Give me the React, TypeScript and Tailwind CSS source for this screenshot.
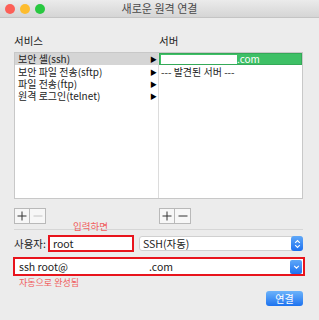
import React from "react"

const font = { fontFamily: '"Noto Sans CJK KR", "Liberation Sans", sans-serif' }

const services = ["보안 셸(ssh)", "보안 파일 전송(sftp)", "파일 전송(ftp)", "원격 로그인(telnet)"]

function PlusMinus({ minusDisabled }: { minusDisabled?: boolean }) {
  return (
    <div className="flex">
      <div className="w-[16px] h-[16px] border border-[#b9b9b9] bg-[#f7f7f7] flex items-center justify-center text-[#333]">
        <svg width="10" height="10" viewBox="0 0 10 10">
          <path d="M5 0.5V9.5M0.5 5H9.5" stroke="currentColor" strokeWidth="1" />
        </svg>
      </div>
      <div
        className={`w-[16px] h-[16px] border border-l-0 border-[#b9b9b9] bg-[#f7f7f7] flex items-center justify-center ${
          minusDisabled ? "text-[#c4c4c4]" : "text-[#333]"
        }`}
      >
        <svg width="10" height="10" viewBox="0 0 10 10">
          <path d="M0.5 5H9.5" stroke="currentColor" strokeWidth="1" />
        </svg>
      </div>
    </div>
  )
}

export default function App() {
  return (
    <div className="w-[319px] h-[320px] bg-[#ececec] flex flex-col overflow-hidden text-[#222]" style={font}>
      {/* 타이틀 바 */}
      <div className="h-[18px] flex items-center relative bg-gradient-to-b from-[#ebebeb] to-[#d5d5d5] border-b border-[#c4c4c4]">
        <div className="flex gap-[5px] pl-[5px]">
          <span className="w-[10px] h-[10px] rounded-full bg-[#fc5f57]" />
          <span className="w-[10px] h-[10px] rounded-full bg-[#fdbc2e]" />
          <span className="w-[10px] h-[10px] rounded-full bg-[#28c840]" />
        </div>
        <div className="absolute inset-0 flex items-center justify-center text-[11px] text-[#4a4a4a]">
          새로운 원격 연결
        </div>
      </div>

      <div className="flex flex-col pl-[14px] pr-[16px]">
        {/* 라벨 */}
        <div className="flex pt-[16px] h-[34px] text-[10.5px] leading-[14px]">
          <div className="w-[145px]">서비스</div>
          <div>서버</div>
        </div>

        {/* 목록 */}
        <div className="h-[147px] flex border border-[#c8c8c8] bg-white text-[10px] leading-[12px]">
          <div className="w-[144px] border-r border-[#dcdcdc] flex flex-col">
            {services.map((s, i) => (
              <div
                key={s}
                className={`h-[12.4px] flex items-center justify-between pl-[3px] pr-[1px] ${
                  i === 0 ? "bg-[#d5d5d5]" : ""
                }`}
              >
                <span className="leading-[12px]">{s}</span>
                <span className="text-[7px] leading-[8px] text-black">▶</span>
              </div>
            ))}
          </div>
          <div className="flex-1 flex flex-col">
            <div className="h-[12.4px] bg-[#3ec066] border border-[#35a958] flex items-center pl-[1px]">
              <span className="w-[76px] h-[9px] bg-white" />
              <span className="text-white leading-[12px]">.com</span>
            </div>
            <div className="h-[12.4px] flex items-center pl-[2px]">--- 발견된 서버 ---</div>
          </div>
        </div>

        {/* +/- */}
        <div className="flex pt-[9px] h-[30px]">
          <div className="w-[145px]">
            <PlusMinus minusDisabled />
          </div>
          <PlusMinus />
        </div>

        {/* 구분선 */}
        <div className="relative h-[6px]">
          <div className="border-t border-[#d6d6d6]" />
          <span className="absolute left-[59px] top-[-8px] text-[9.5px] leading-[11px] text-[#f06060]">입력하면</span>
        </div>

        {/* 사용자 */}
        <div className="flex items-center h-[17px]">
          <span className="w-[34px] text-[10.5px]">사용자:</span>
          <div className="w-[86px] h-[17px] border-2 border-[#e8141c] bg-white flex items-center pl-[3px] text-[10.5px]">
            root
          </div>
          <div className="ml-[5px] flex-1 h-[15px] border border-[#d0d0d0] rounded-[3px] bg-white flex items-center pl-[3px] text-[10.5px] relative">
            SSH(자동)
            <div className="absolute right-[-1px] top-[-1px] w-[12px] h-[15px] rounded-[3px] bg-gradient-to-b from-[#5fa8f8] to-[#1a6ff0] flex items-center justify-center">
              <svg width="7" height="10" viewBox="0 0 7 10">
                <path d="M1.2 3.8L3.5 1.5L5.8 3.8M1.2 6.2L3.5 8.5L5.8 6.2" stroke="white" strokeWidth="1.1" fill="none" />
              </svg>
            </div>
          </div>
        </div>

        {/* 명령 콤보 */}
        <div className="mt-[5px] ml-[-1px] mr-[-2px] h-[19px] border-2 border-[#e8141c] bg-white flex items-center pl-[4px] text-[10.5px] relative">
          <span className="w-[130px]">ssh root@</span>
          <span>.com</span>
          <div className="absolute right-[1px] top-[1px] w-[12px] h-[14px] rounded-[2px] bg-gradient-to-b from-[#5fa8f8] to-[#1a6ff0] flex items-center justify-center">
            <svg width="7" height="6" viewBox="0 0 7 6">
              <path d="M1.2 1.8L3.5 4.2L5.8 1.8" stroke="white" strokeWidth="1.1" fill="none" />
            </svg>
          </div>
        </div>

        <div className="pl-[5px] pt-[1px] text-[9px] leading-[11px] text-[#f06060]">자동으로 완성됨</div>

        {/* 연결 */}
        <div className="flex justify-end pt-[3px]">
          <div className="w-[37px] h-[15px] rounded-[3px] bg-gradient-to-b from-[#6cb3fa] to-[#1b72ef] text-white text-[10px] flex items-center justify-center">
            연결
          </div>
        </div>
      </div>
    </div>
  )
}
